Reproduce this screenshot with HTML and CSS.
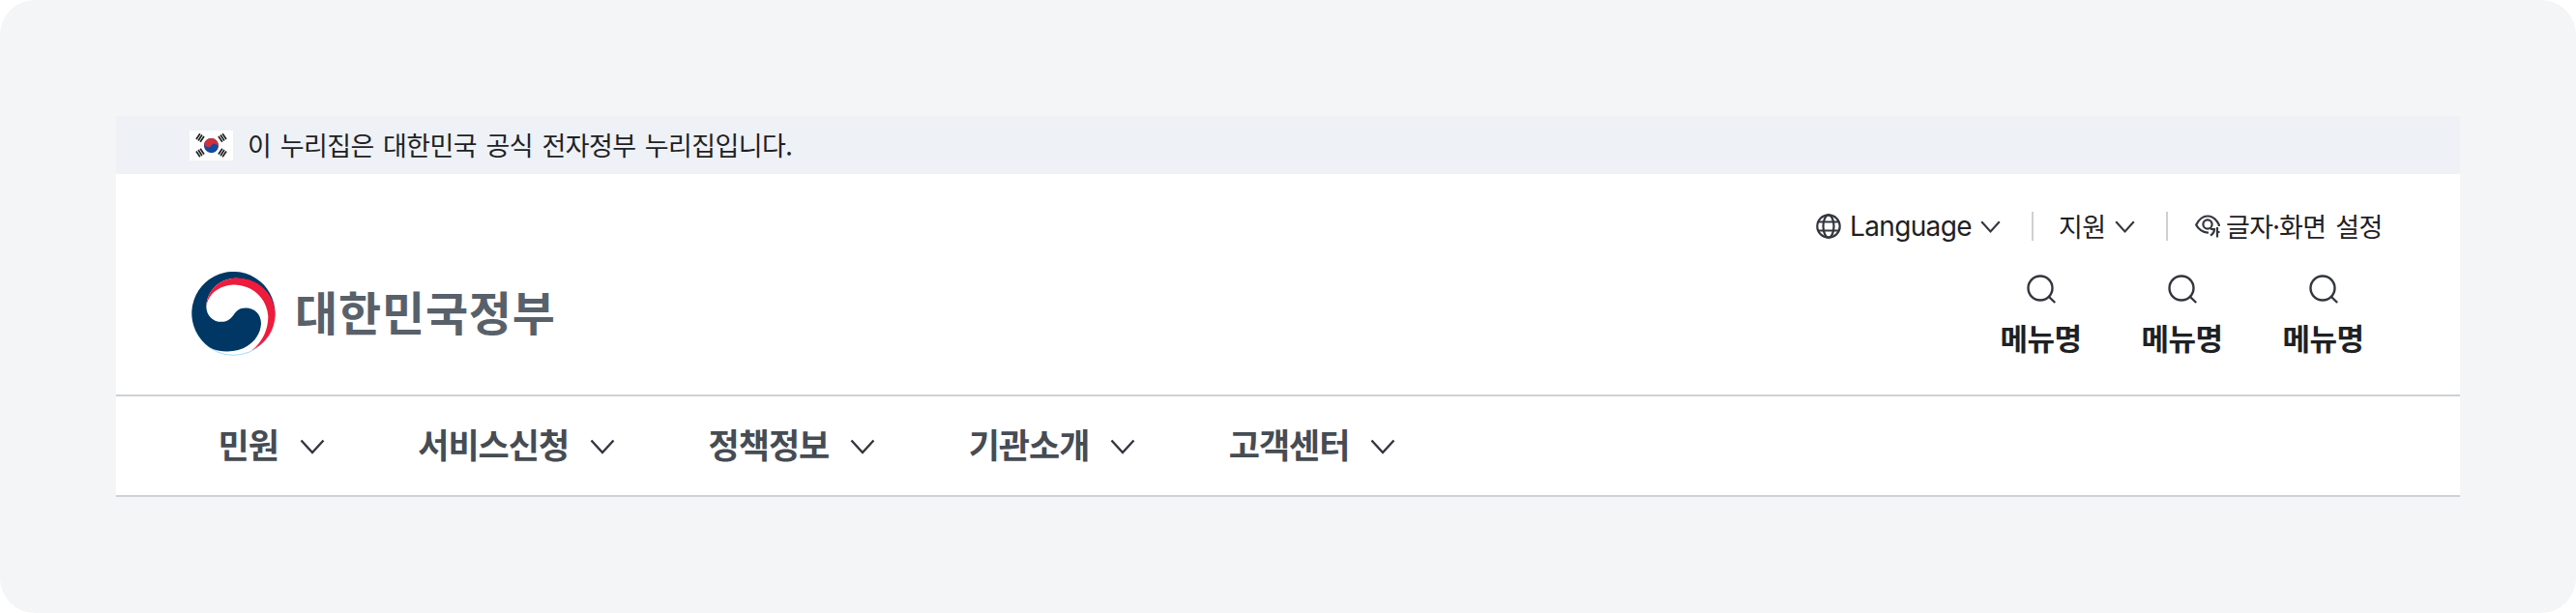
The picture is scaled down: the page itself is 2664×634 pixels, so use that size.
FILE: index.html
```html
<!DOCTYPE html>
<html lang="ko">
<head>
<meta charset="utf-8">
<title>대한민국정부</title>
<link rel="stylesheet" href="styles.css">
</head>
<body>
<svg class="defs" aria-hidden="true">
  <symbol id="chevron" viewBox="0 0 26 16"><path d="M1.5 1.5 13 14 24.5 1.5"/></symbol>
  <symbol id="search" viewBox="0 0 34 34"><circle cx="15" cy="15" r="12.5"/><path d="M24 24l6.2 6"/></symbol>
</svg>
<div class="frame">
  <header class="header">
    <div class="banner">
      <svg class="flag" viewBox="0 0 45 31">
        <rect width="45" height="31" fill="#fff"/>
        <g transform="rotate(33 22.5 15.5)">
          <circle cx="22.5" cy="15.5" r="7.6" fill="#134a9c"/>
          <path d="M14.900 15.500a7.600 7.600 0 0 1 15.200 0a3.800 3.800 0 0 0-7.600 0a3.800 3.800 0 0 1-7.600 0z" fill="#d0303c"/>
        </g>
        <g stroke="#222" stroke-width="1.7">
          <path transform="translate(11 7.5) rotate(-56)" d="M-3.5-2.5h7M-3.5 0h7M-3.5 2.5h7"/>
          <path transform="translate(34 7.5) rotate(56)" d="M-3.5-2.5h7M-3.5 0h7M-3.5 2.5h7"/>
          <path transform="translate(11 23) rotate(56)" d="M-3.5-2.5h7M-3.5 0h7M-3.5 2.5h7"/>
          <path transform="translate(34 23) rotate(-56)" d="M-3.5-2.5h7M-3.5 0h7M-3.5 2.5h7"/>
        </g>
      </svg>
      <span class="banner-text">이 누리집은 대한민국 공식 전자정부 누리집입니다.</span>
    </div>
    <div class="main">
      <a class="logo">
        <svg class="emblem" viewBox="54 62 261 260">
          <circle cx="184.500" cy="192" r="128.500" fill="#fff" stroke="#6dcff6" stroke-width="2"/>
          <path d="M110 296A129 129 0 1 1 313 192C300 120 240 80 190 82C140 84 102 120 100 170C101 200 122 217 147 217C190 217 180 174 222 174C250 174 270 194 270 222C268 270 225 309 165 309C145 309 125 305 110 296z" fill="#003764"/>
          <path d="M100 170C102 120 140 82 195 81C262 82 313 130 314 195C312 245 285 285 240 306C275 280 292 240 292 200C288 142 240 102 185 102C140 104 106 130 100 170z" fill="#ee1c3c"/>
        </svg>
        <span class="logo-text">대한민국정부</span>
      </a>
      <div class="side">
        <div class="utils">
          <a class="util">
            <svg class="globe" viewBox="0 0 26 26"><circle cx="13" cy="13" r="11.700"/><ellipse cx="13" cy="13" rx="5.500" ry="11.700"/><path d="M2 8.500h22M2 17.500h22"/></svg>
            <span class="latin">Language</span>
            <svg class="chev"><use href="#chevron"/></svg>
          </a>
          <i class="bar"></i>
          <a class="util support"><span>지원</span><svg class="chev"><use href="#chevron"/></svg></a>
          <i class="bar"></i>
          <a class="util setting">
            <svg class="eye" viewBox="0 0 26 24"><path d="M14 18.500C8 19 3 14.500 1.200 10.500C4 5 8 1.500 13 1.500S22 5 24.800 10.500V12"/><circle cx="13" cy="10" r="4.600"/><path d="M16 15h4c0 3-1.500 5-4 6.500M23 13v10.500M23 18h2.500"/></svg>
            <span>글자·화면 설정</span>
          </a>
        </div>
        <div class="menus">
          <a class="menu"><svg class="search"><use href="#search"/></svg><span>메뉴명</span></a>
          <a class="menu"><svg class="search"><use href="#search"/></svg><span>메뉴명</span></a>
          <a class="menu"><svg class="search"><use href="#search"/></svg><span>메뉴명</span></a>
        </div>
      </div>
    </div>
    <nav class="nav">
      <a class="nav-item"><span>민원</span><svg class="nav-chev"><use href="#chevron"/></svg></a>
      <a class="nav-item"><span>서비스신청</span><svg class="nav-chev"><use href="#chevron"/></svg></a>
      <a class="nav-item"><span>정책정보</span><svg class="nav-chev"><use href="#chevron"/></svg></a>
      <a class="nav-item"><span>기관소개</span><svg class="nav-chev"><use href="#chevron"/></svg></a>
      <a class="nav-item"><span>고객센터</span><svg class="nav-chev"><use href="#chevron"/></svg></a>
    </nav>
  </header>
</div>
</body>
</html>
```
FILE: styles.css
```css
* { box-sizing: border-box; }
body {
  margin: 0;
  background: #fff;
  color: #1e2124;
  font-family: "Noto Sans CJK KR", sans-serif;
}
svg { display: block; flex: none; fill: none; }
.defs { position: absolute; width: 0; height: 0; }
.frame {
  width: 2664px;
  height: 634px;
  padding: 120px;
  border-radius: 36px;
  background: #f4f5f6;
}
.header {
  display: flex;
  flex-direction: column;
  height: 394px;
  background: #fff;
}
.banner {
  display: flex;
  align-items: center;
  gap: 15px;
  height: 60px;
  padding-left: 76px;
  background: #eef1f6;
}
.flag { width: 45px; height: 31px; }
.banner-text {
  font-size: 27px;
  line-height: 40px;
  letter-spacing: -0.58px;
  word-spacing: 2.4px;
  white-space: nowrap;
}
.main {
  display: flex;
  justify-content: space-between;
  height: 228px;
  padding: 38px 80px 0 78px;
}
.logo {
  display: flex;
  align-items: center;
  gap: 20px;
  height: 88px;
  margin-top: 62px;
}
.emblem { width: 87px; height: 87px; }
.logo-text {
  padding-bottom: 7px;
  color: #58616a;
  font-size: 48px;
  font-weight: 700;
  line-height: 60px;
  letter-spacing: 0.8px;
  white-space: nowrap;
}
.side { display: flex; flex-direction: column; align-items: flex-end; }
.utils { display: flex; align-items: center; height: 32px; }
.util {
  display: flex;
  align-items: center;
  font-size: 27px;
  line-height: 32px;
  letter-spacing: -0.7px;
  white-space: nowrap;
}
.latin { width: 125px; margin: 0 10px 0 9px; font-family: Inter, sans-serif; font-size: 28px; letter-spacing: -0.65px; }
.support span { width: 48px; margin: 0 10px 0 -2px; }
.setting span { width: 162px; margin-left: 6px; word-spacing: 3px; }
.globe, .eye, .chev, .nav-chev, .search { stroke: #33363d; stroke-width: 2.2; }
.chev { stroke-width: 2.6; }
.nav-chev, .search { stroke-width: 2.4; }
.globe { width: 26px; height: 26px; }
.eye { width: 26px; height: 24px; }
.chev { width: 21px; height: 13px; margin-top: 1px; }
.bar { width: 2px; height: 30px; margin: 0 28px 0 32px; background: #cdd1d5; }
.menus { display: flex; gap: 62px; margin: 33px 18px 0 0; }
.menu {
  display: flex;
  flex-direction: column;
  align-items: center;
  width: 84px;
  font-size: 31px;
  font-weight: 700;
  line-height: 40px;
  letter-spacing: -0.5px;
  white-space: nowrap;
}
.menu span { padding-right: 3px; }
.search { width: 34px; height: 34px; margin-bottom: 12px; }
.nav {
  display: flex;
  align-items: center;
  gap: 96.5px;
  height: 106px;
  padding-left: 105.5px;
  border-top: 2px solid #cdd1d5;
  border-bottom: 2px solid #cdd1d5;
}
.nav-item {
  display: flex;
  align-items: center;
  gap: 22px;
  color: #464c53;
  font-size: 35px;
  font-weight: 700;
  line-height: 50px;
  letter-spacing: -1.05px;
  white-space: nowrap;
}
.nav-item span { padding-bottom: 5px; }
.nav-chev { width: 26px; height: 16px; margin-top: 2px; }
```
